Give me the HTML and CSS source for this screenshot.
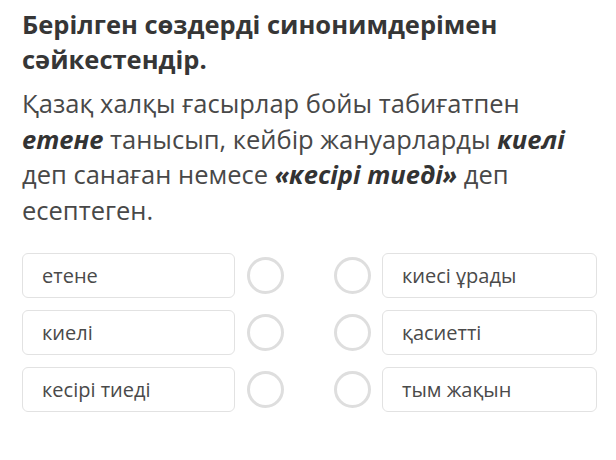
FILE: index.html
```html
<!DOCTYPE html>
<html lang="kk">
<head>
<meta charset="utf-8">
<link rel="stylesheet" href="styles.css">
</head>
<body>
<div class="page">
  <h1 class="title">Берілген сөздерді синонимдерімен сәйкестендір.</h1>
  <p class="text">Қазақ халқы ғасырлар бойы табиғатпен <b><i>етене</i></b> танысып, кейбір жануарларды <b><i>киелі</i></b> деп санаған немесе <b><i>«кесірі тиеді»</i></b> деп есептеген.</p>
  <div class="match">
    <div class="row">
      <div class="box left">етене</div>
      <span class="dot dot-l"></span>
      <span class="dot dot-r"></span>
      <div class="box right">киесі ұрады</div>
    </div>
    <div class="row">
      <div class="box left">киелі</div>
      <span class="dot dot-l"></span>
      <span class="dot dot-r"></span>
      <div class="box right">қасиетті</div>
    </div>
    <div class="row">
      <div class="box left">кесірі тиеді</div>
      <span class="dot dot-l"></span>
      <span class="dot dot-r"></span>
      <div class="box right">тым жақын</div>
    </div>
  </div>
</div>
</body>
</html>
```
FILE: styles.css
```css
html, body {
  margin: 0;
  padding: 0;
  background: #ffffff;
}
.page {
  padding: 7px 0 0 22px;
  font-family: "Open Sans", "Noto Sans", sans-serif;
  color: #444444;
}
.title {
  margin: 0;
  font-size: 25.5px;
  line-height: 35px;
  font-weight: 700;
  color: #363636;
  width: 570px;
}
.text {
  margin: 9px 0 0 0;
  font-size: 25.5px;
  line-height: 35.7px;
  width: 570px;
  color: #484848;
}
.text b {
  color: #333333;
}
.match {
  margin-top: 24px;
  display: flex;
  flex-direction: column;
  gap: 12px;
}
.row {
  display: flex;
  align-items: center;
}
.box {
  box-sizing: border-box;
  height: 45px;
  border: 1.5px solid #e2e2e2;
  border-radius: 6px;
  display: flex;
  align-items: center;
  padding-left: 19px;
  font-size: 20px;
  color: #4a4a4a;
}
.left { width: 213px; }
.right { width: 215px; }
.dot {
  box-sizing: border-box;
  width: 37px;
  height: 37px;
  border: 3px solid #dedede;
  border-radius: 50%;
}
.dot-l { margin-left: 12px; }
.dot-r { margin-left: 50px; margin-right: 11px; }
```
